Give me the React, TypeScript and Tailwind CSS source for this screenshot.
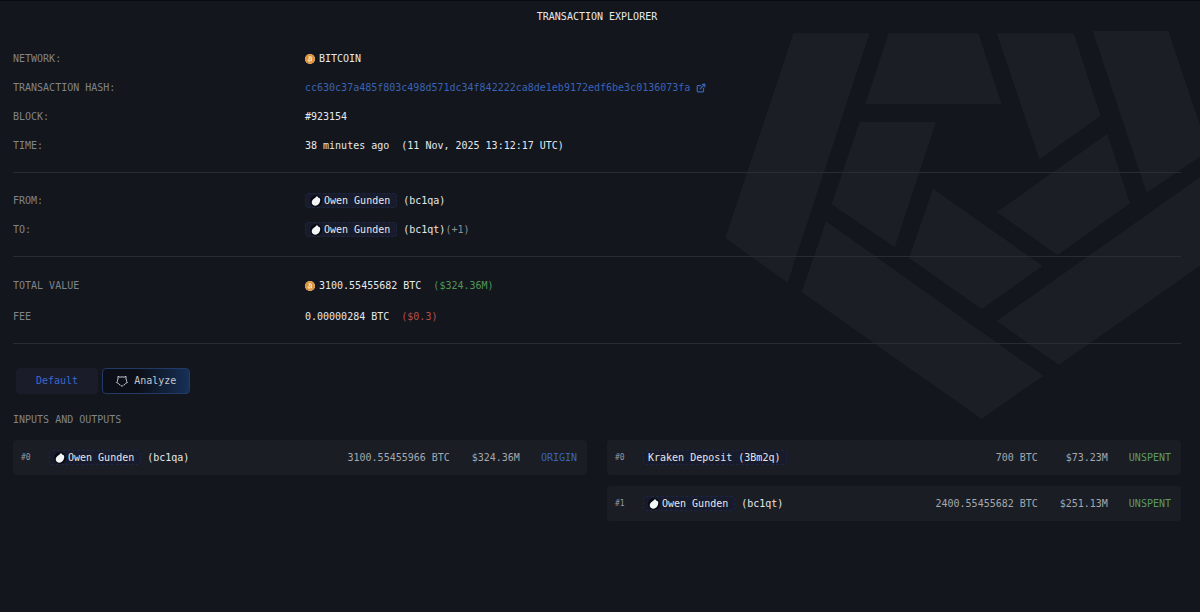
import React from "react";
import { ExternalLink } from "lucide-react";
import { SiBitcoin } from "react-icons/si";

type Transfer = {
  index: number;
  name: string;
  address?: string;
  amount: string;
  usd: string;
  status: string;
};

const inputs: Transfer[] = [
  { index: 0, name: "Owen Gunden", address: "(bc1qa)", amount: "3100.55455966 BTC", usd: "$324.36M", status: "ORIGIN" },
];

const outputs: Transfer[] = [
  { index: 0, name: "Kraken Deposit (3Bm2q)", amount: "700 BTC", usd: "$73.23M", status: "UNSPENT" },
  { index: 1, name: "Owen Gunden", address: "(bc1qt)", amount: "2400.55455682 BTC", usd: "$251.13M", status: "UNSPENT" },
];

function Watermark() {
  return (
    <svg
      viewBox="0 3 1500 1290"
      className="absolute top-0 right-0 w-[500px] h-[430px] overflow-visible"
      fill="#1b1e25"
      aria-hidden="true"
    >
      <path d="M280 100H509L263 848L76 714Z" />
      <path d="M566 100H835L905 312H496Z" />
      <path d="M890 100H1121L1202 348L1018 478Z" />
      <path d="M1178 93H1405L1526 452L1340 578Z" />
      <path d="M479 366H708L584 742L395 613Z" />
      <path d="M1222 402L1290 610L1073 766L890 636Z" />
      <path d="M699 566L1028 798L845 928L627 774Z" />
      <path d="M378 664L1030 1127L845 1257L305 877Z" />
      <path d="M1540 503L1610 720L1077 1095L890 963Z" />
    </svg>
  );
}

function BitcoinIcon() {
  return <SiBitcoin className="size-[10px] shrink-0 rounded-full bg-[#f6e3c6] text-[#e0943a]" />;
}

function BlobIcon() {
  return (
    <svg viewBox="0 0 12 12" className="size-3 shrink-0" aria-hidden="true">
      <circle cx="6" cy="6" r="6" fill="#090b12" />
      <path
        d="M7 1L8.4 2.8C9.6 2.6 10.3 3.6 10.2 5C10.2 7 9.2 8.8 7.8 9.8C6.400 10.800 4.400 10.900 3.200 10.100C1.800 9.200 1.400 7.600 2 6.100C2.600 4.500 3.900 3.600 5 2.900Z"
        fill="#f4f5f7"
      />
    </svg>
  );
}

function AnalyzeIcon() {
  return (
    <svg
      viewBox="0 0 24 24"
      className="size-3 shrink-0"
      fill="none"
      stroke="currentColor"
      strokeWidth="2"
      strokeLinejoin="round"
      aria-hidden="true"
    >
      <path d="M8 4.500C10.500 3.500 13.500 3.500 16 4.500L20 2.500L20 8" />
      <path d="M8 4.500L4 2.500L4 8C3 9.500 2.800 11 3 12.500" />
      <path d="M20 8C21 9.500 21.200 11 21 12.500L23 15L19.500 16.500" />
      <path d="M3 12.500L1 15L4.500 16.500C5.300 18 6.500 19.300 8 20" />
      <path d="M19.500 16.500C18.700 18 17.500 19.300 16 20" />
      <path d="M9 20.500L12 22.500L15 20.500" />
    </svg>
  );
}

function Tag({ name }: { name: string }) {
  return (
    <a
      href="#entity"
      className="flex items-center h-[15px] gap-[2px] pl-1 pr-[6px] rounded-[3px] border border-dashed border-[#1e2540] bg-[#171b2b] text-[#e6e8ec]"
    >
      {name === "Owen Gunden" && <BlobIcon />}
      {name}
    </a>
  );
}

type RowProps = { label: string; tall?: boolean; children: React.ReactNode };

function Row({ label, tall, children }: RowProps) {
  return (
    <div className={`grid grid-cols-4 items-center ${tall ? "h-[31px]" : "h-[29px]"}`}>
      <dt className="text-[#80838a]">{label}</dt>
      <dd className="flex items-center col-span-3 whitespace-pre">{children}</dd>
    </div>
  );
}

function TransferList({ items }: { items: Transfer[] }) {
  return (
    <ul className="flex flex-col flex-1 gap-[11px]">
      {items.map((item) => (
        <li key={item.index} className="flex items-center h-[35px] pl-2 pr-[10px] gap-[21px] rounded-[4px] bg-[#1a1d24] text-[#a5a8ae]">
          <div className="flex items-center flex-1 gap-[6px] text-[#e6e8ec]">
            <span className="w-[22px] text-[8px] text-[#9699a0]">#{item.index}</span>
            <Tag name={item.name} />
            {item.address && <a href="#address">{item.address}</a>}
          </div>
          <span>{item.amount}</span>
          <span className="w-[49px] text-right">{item.usd}</span>
          <span className={item.status === "ORIGIN" ? "text-[#3b63bd]" : "text-[#5a9a62]"}>
            {item.status}
          </span>
        </li>
      ))}
    </ul>
  );
}

function App() {
  return (
    <main className="relative min-h-screen overflow-hidden border-t border-[#090b12] bg-[#13161d] pl-[13px] pr-[19px] pb-6 font-['DejaVu_Sans_Mono',monospace] text-[10px] leading-4 text-[#e6e8ec]">
      <Watermark />
      <div className="relative">
        <h1 className="flex items-center justify-center h-[31px]">TRANSACTION EXPLORER</h1>

        <dl>
          <div className="pt-3 pb-3 border-b border-[#292c33]">
            <Row label="NETWORK:">
              <span className="flex items-center gap-1">
                <BitcoinIcon />
                BITCOIN
              </span>
            </Row>
            <Row label="TRANSACTION HASH:">
              <a href="#transaction" className="flex items-center gap-[6px] text-[#3b62b4]">
                cc630c37a485f803c498d571dc34f842222ca8de1eb9172edf6be3c0136073fa
                <ExternalLink size={10} strokeWidth={3} />
              </a>
            </Row>
            <Row label="BLOCK:">#923154</Row>
            <Row label="TIME:">
              <span className="flex gap-3">
                <span>38 minutes ago</span>
                <span>(11 Nov, 2025 13:12:17 UTC)</span>
              </span>
            </Row>
          </div>

          <div className="pt-[13px] pb-3 border-b border-[#292c33]">
            <Row label="FROM:">
              <span className="flex items-center gap-[6px]">
                <Tag name="Owen Gunden" />
                <a href="#address">(bc1qa)</a>
              </span>
            </Row>
            <Row label="TO:">
              <span className="flex items-center gap-[6px]">
                <Tag name="Owen Gunden" />
                <a href="#address">(bc1qt)</a>
              </span>
              <span className="text-[#8b8e95]">(+1)</span>
            </Row>
          </div>

          <div className="pt-[13px] pb-[11px] border-b border-[#292c33]">
            <Row label="TOTAL VALUE" tall>
              <span className="flex items-center gap-1">
                <BitcoinIcon />
                3100.55455682 BTC
              </span>
              <span className="ml-3 text-[#529558]">($324.36M)</span>
            </Row>
            <Row label="FEE" tall>
              <span>0.00000284 BTC</span>
              <span className="ml-3 text-[#b64f4c]">($0.3)</span>
            </Row>
          </div>
        </dl>

        <div className="flex gap-1 pt-6 pl-[3px]">
          <button className="h-[26px] px-5 rounded-[4px] bg-[#1a1d29] text-[#3c68cb]">Default</button>
          <button className="flex items-center h-[26px] px-[13px] gap-[6px] rounded-[4px] border border-[#233a66] bg-linear-to-r from-[#0c0f17] from-40% to-[#163058] text-[#c3c6cd]">
            <AnalyzeIcon />
            Analyze
          </button>
        </div>

        <h2 className="mt-[18px] text-[#80838a]">INPUTS AND OUTPUTS</h2>
        <div className="flex items-start gap-5 mt-3">
          <TransferList items={inputs} />
          <TransferList items={outputs} />
        </div>
      </div>
    </main>
  );
}

export default App;
